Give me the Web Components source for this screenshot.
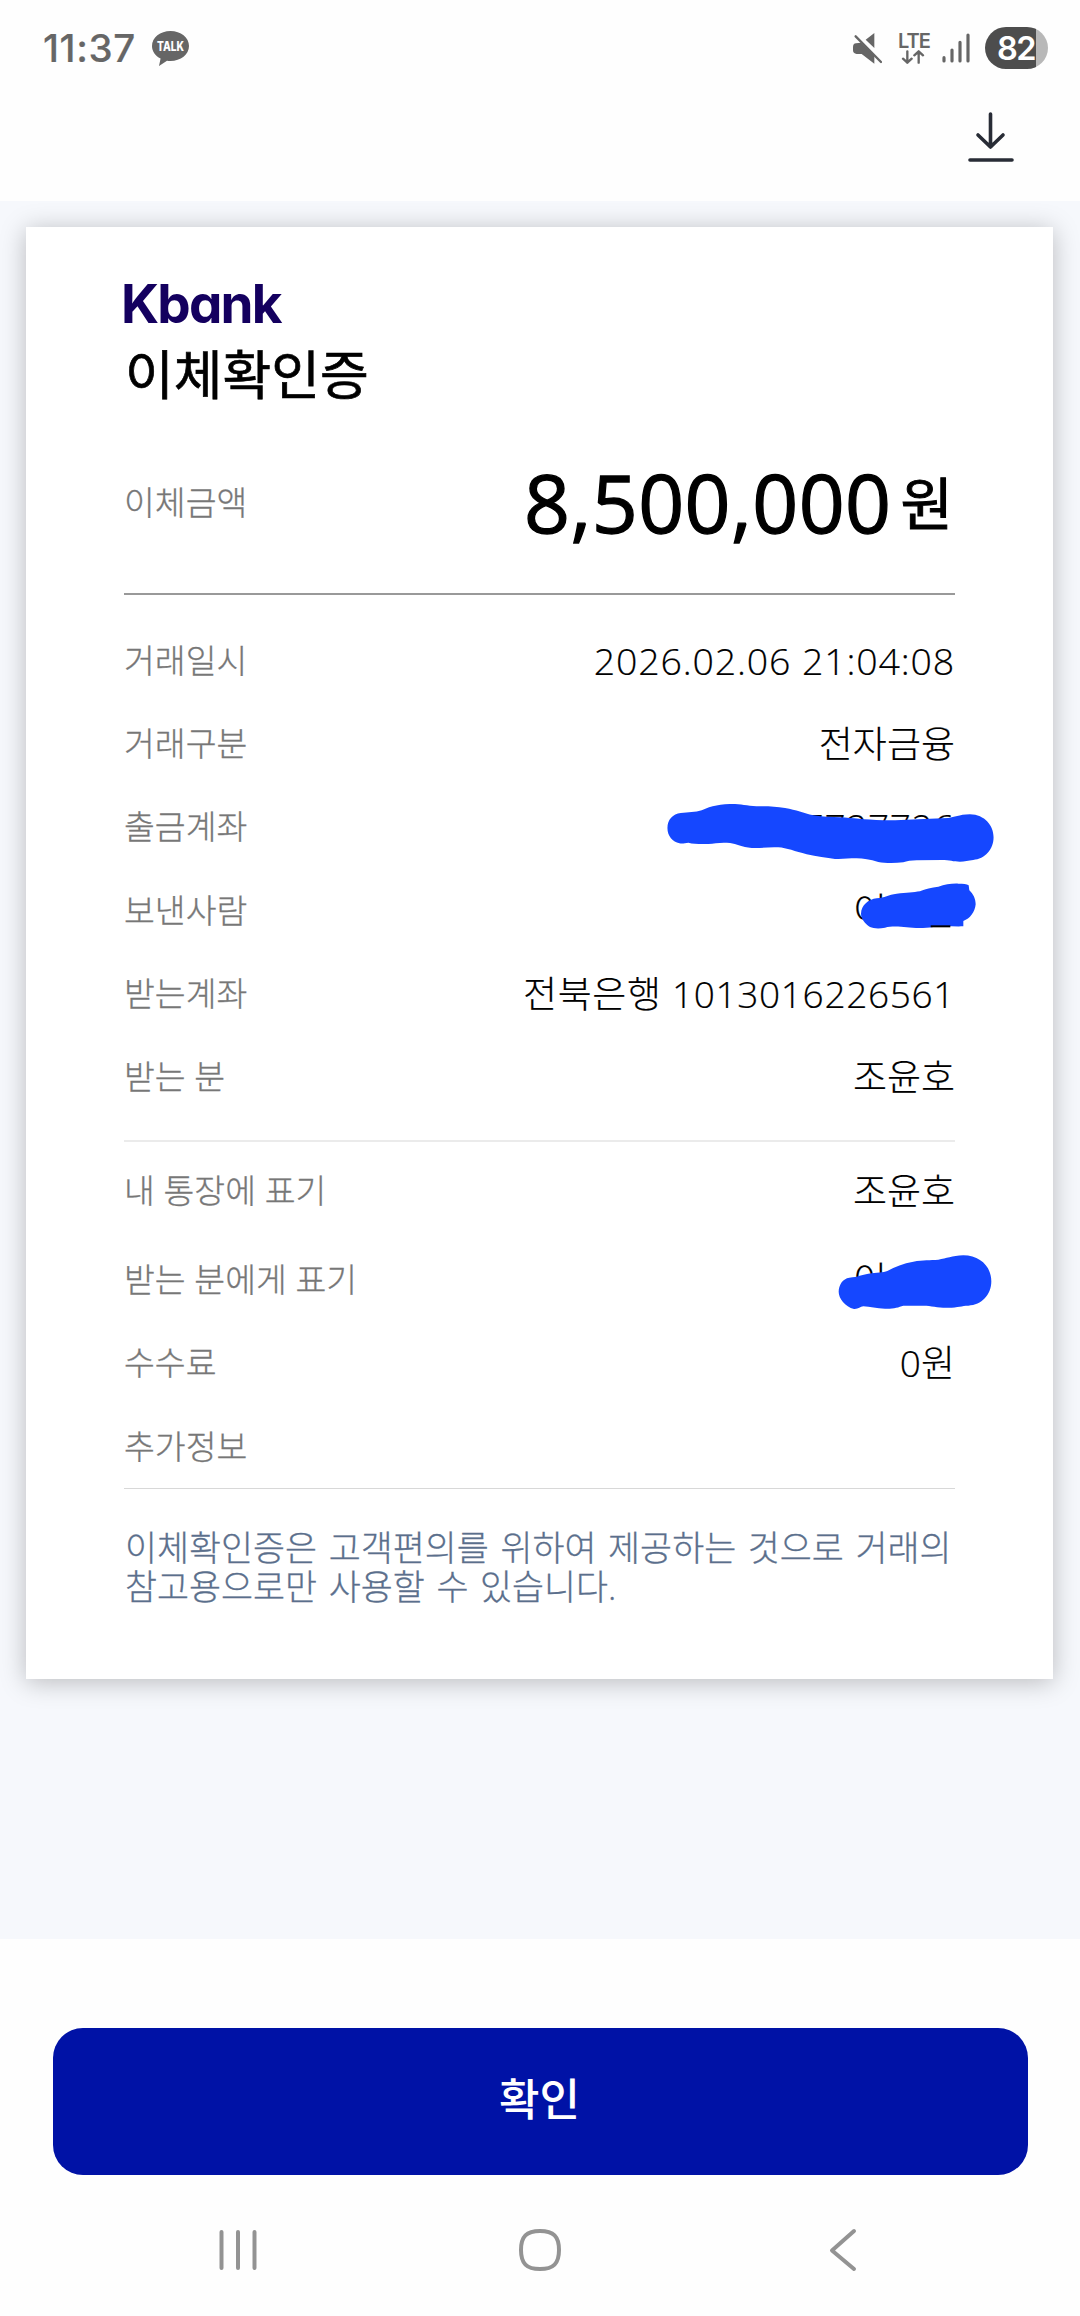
<!DOCTYPE html>
<html lang="ko">
<head>
<meta charset="utf-8">
<title>이체확인증</title>
<style>
    body {
        margin: 0;
        background: #fefefe;
        font-family: "Open Sans", "Noto Sans CJK KR", sans-serif;
        color: #000;
    }
</style>
</head>
<body>
<app-screen>
    <status-bar slot="top" time="11:37" battery="82"></status-bar>
    <tool-bar slot="top"></tool-bar>
    <receipt-card heading="이체확인증">
        <amount-row slot="amount" label="이체금액" unit="원">8,500,000</amount-row>
        <detail-row slot="trade" label="거래일시" class="date">2026.02.06 21:04:08</detail-row>
        <detail-row slot="trade" label="거래구분">전자금융</detail-row>
        <detail-row slot="trade" label="출금계좌" class="number">7727726<redact-mark shape="account"></redact-mark></detail-row>
        <detail-row slot="trade" label="보낸사람" class="masked">이<redact-mark shape="sender"></redact-mark></detail-row>
        <detail-row slot="trade" label="받는계좌" class="number">전북은행 1013016226561</detail-row>
        <detail-row slot="trade" label="받는 분">조윤호</detail-row>
        <detail-row slot="memo" label="내 통장에 표기" class="wide">조윤호</detail-row>
        <detail-row slot="memo" label="받는 분에게 표기" class="masked">이<redact-mark shape="memo"></redact-mark></detail-row>
        <detail-row slot="memo" label="수수료">0원</detail-row>
        <detail-row slot="memo" label="추가정보"></detail-row>
        <span slot="note">이체확인증은 고객편의를 위하여 제공하는 것으로 거래의<br>참고용으로만 사용할 수 있습니다.</span>
    </receipt-card>
    <confirm-button slot="bottom">확인</confirm-button>
    <nav-bar slot="bottom"></nav-bar>
</app-screen>

<script>
    class AppScreen extends HTMLElement {
        constructor() {
            super();
            this.attachShadow({ mode: 'open' });
            this.shadowRoot.innerHTML = `
                <style>
                    :host {
                        display: flex;
                        flex-direction: column;
                        width: 1080px;
                        height: 2316px;
                        overflow: hidden;
                    }
                    main {
                        box-sizing: border-box;
                        height: 1738px;
                        padding: 26px 27px 0 26px;
                        background: #f6f8fc;
                        overflow: hidden;
                    }
                </style>
                <header><slot name="top"></slot></header>
                <main><slot></slot></main>
                <footer><slot name="bottom"></slot></footer>
            `;
        }
    }

    class StatusBar extends HTMLElement {
        constructor() {
            super();
            this.attachShadow({ mode: 'open' });
            this.shadowRoot.innerHTML = `
                <style>
                    :host {
                        display: flex;
                        align-items: center;
                        box-sizing: border-box;
                        height: 96px;
                        padding: 0 32px 0 43px;
                        font-family: Inter, sans-serif;
                        color: #666;
                    }
                    .time {
                        width: 109px;
                        font-size: 38.500px;
                        font-weight: 500;
                        letter-spacing: 0.6px;
                        -webkit-text-stroke: 0.2px #666;
                    }
                    svg { display: block; flex: none; }
                    .right {
                        display: flex;
                        align-items: center;
                        margin-left: auto;
                    }
                    .lte {
                        margin: 0 1px 0 16px;
                        width: 30px;
                        font-size: 20px;
                        font-weight: 600;
                        line-height: 17px;
                        letter-spacing: -1px;
                    }
                    .signal { margin-left: 13px; }
                    .battery {
                        display: flex;
                        align-items: center;
                        box-sizing: border-box;
                        width: 63px;
                        height: 42px;
                        margin-left: 15px;
                        padding-left: 12px;
                        border-radius: 21px;
                        background: linear-gradient(90deg, #4d4d4d 51px, #b8b8b8 51px);
                        color: #fff;
                        font-size: 32.500px;
                        font-weight: 600;
                        letter-spacing: -1.5px;
                    }
                </style>
                <span class="time"></span>
                <svg width="37" height="35" viewBox="0 0 37 35">
                    <path fill="#666" d="M18.500 0C8.300 0 0 6.500 0 15c0 5.300 3.200 9.800 8.600 12.500L7 35l8-5.300c1.100.2 2.300.3 3.500.3C28.700 30 37 23.500 37 15S28.700 0 18.500 0Z"/>
                    <text x="18.500" y="20" text-anchor="middle" font-size="12.500" font-weight="800" textLength="27" lengthAdjust="spacingAndGlyphs" fill="#fff">TALK</text>
                </svg>
                <div class="right">
                    <svg width="29" height="31" viewBox="219 98 87 93">
                        <path fill="#666" d="M257 118 283 98V143ZM228 129 243 127 283 165V190L245 161H230Q219 160 219 150V140Q219 130 228 129Z"/>
                        <path stroke="#666" stroke-width="7" stroke-linecap="round" d="M227 108 303 185"/>
                    </svg>
                    <div class="lte">LTE
                        <svg width="30" height="14" viewBox="357 152 90 42" fill="none" stroke="#666" stroke-width="7" stroke-linecap="round" stroke-linejoin="round">
                            <path d="M385 156V190M372 178 385 190 398 178M419 190V156M406 168 419 156 432 168"/>
                        </svg>
                    </div>
                    <svg class="signal" width="28" height="30" viewBox="486 100 84 90" stroke="#666" stroke-width="9.500" stroke-linecap="round">
                        <path d="M492 174V184M516 151V184M540 128V184M564 106V184"/>
                    </svg>
                    <div class="battery"></div>
                </div>
            `;
        }

        connectedCallback() {
            this.shadowRoot.querySelector('.time').textContent = this.getAttribute('time');
            this.shadowRoot.querySelector('.battery').textContent = this.getAttribute('battery');
        }
    }

    class ToolBar extends HTMLElement {
        constructor() {
            super();
            this.attachShadow({ mode: 'open' });
            this.shadowRoot.innerHTML = `
                <style>
                    :host {
                        display: flex;
                        justify-content: flex-end;
                        box-sizing: border-box;
                        height: 105px;
                        padding: 15px 66px 0 0;
                    }
                </style>
                <svg width="48" height="52" viewBox="0 0 48 52" fill="none" stroke="#282c36" stroke-width="3.600" stroke-linecap="round" stroke-linejoin="round">
                    <path d="M24.500 3V36M12 24 24.500 36 37 24M4 49H46"/>
                </svg>
            `;
        }
    }

    class ReceiptCard extends HTMLElement {
        constructor() {
            super();
            this.attachShadow({ mode: 'open' });
            this.shadowRoot.innerHTML = `
                <style>
                    :host {
                        display: block;
                        box-sizing: border-box;
                        height: 1452px;
                        padding: 44px 98px 0 98px;
                        background: #fff;
                        box-shadow: 0 3px 24px rgba(0, 0, 0, 0.25);
                    }
                    .logo {
                        height: 64px;
                        margin-left: -3px;
                        font: 700 53px/66px Inter, sans-serif;
                        font-feature-settings: "cv11";
                        letter-spacing: -1.8px;
                        color: #14005f;
                    }
                    h1 {
                        height: 80px;
                        margin: 0 0 0 1px;
                        font-size: 53px;
                        font-weight: 400;
                        line-height: 80px;
                        -webkit-text-stroke: 0.7px #000;
                    }
                    .trade {
                        height: 547px;
                        box-sizing: border-box;
                        padding-top: 24px;
                        border-bottom: 2px solid #ebebeb;
                    }
                    .memo {
                        height: 347px;
                        box-sizing: border-box;
                        padding-top: 7px;
                        border-bottom: 1px solid #d8d8d8;
                    }
                    .note {
                        margin: 39px 0 0 1px;
                        font-size: 34.800px;
                        font-weight: 300;
                        line-height: 39px;
                        word-spacing: 2.6px;
                        white-space: nowrap;
                        color: #5b6f8c;
                        -webkit-text-stroke: 0.3px #5b6f8c;
                    }
                </style>
                <div class="logo">Kbank</div>
                <h1></h1>
                <slot name="amount"></slot>
                <div class="trade"><slot name="trade"></slot></div>
                <div class="memo"><slot name="memo"></slot></div>
                <div class="note"><slot name="note"></slot></div>
            `;
        }

        connectedCallback() {
            this.shadowRoot.querySelector('h1').textContent = this.getAttribute('heading');
        }
    }

    class AmountRow extends HTMLElement {
        constructor() {
            super();
            this.attachShadow({ mode: 'open' });
            this.shadowRoot.innerHTML = `
                <style>
                    :host {
                        display: flex;
                        box-sizing: border-box;
                        height: 180px;
                        border-bottom: 2px solid #999;
                        line-height: 175px;
                        white-space: nowrap;
                    }
                    .label {
                        font-size: 33.500px;
                        font-weight: 300;
                        color: #777;
                        -webkit-text-stroke: 0.3px #777;
                    }
                    .sum {
                        margin-left: auto;
                        font-size: 80.500px;
                        letter-spacing: 0.4px;
                        -webkit-text-stroke: 1.3px #000;
                    }
                    .unit {
                        margin: 1px 2px 0 9px;
                        font-size: 57px;
                        -webkit-text-stroke: 1px #000;
                    }
                </style>
                <span class="label"></span>
                <span class="sum"><slot></slot></span>
                <span class="unit"></span>
            `;
        }

        connectedCallback() {
            this.shadowRoot.querySelector('.label').textContent = this.getAttribute('label');
            this.shadowRoot.querySelector('.unit').textContent = this.getAttribute('unit');
        }
    }

    class DetailRow extends HTMLElement {
        constructor() {
            super();
            this.attachShadow({ mode: 'open' });
            this.shadowRoot.innerHTML = `
                <style>
                    :host {
                        display: flex;
                        justify-content: space-between;
                        height: 83.200px;
                        line-height: 83.200px;
                        font-weight: 300;
                        white-space: nowrap;
                    }
                    :host(.wide) { margin-bottom: 6px; }
                    .label {
                        font-size: 33.500px;
                        color: #777;
                        -webkit-text-stroke: 0.3px #777;
                    }
                    .value {
                        position: relative;
                        font-size: 37px;
                        line-height: 83px;
                        -webkit-text-stroke: 0.2px #000;
                    }
                    :host(.date) .value {
                        font-size: 37.500px;
                        letter-spacing: 0.85px;
                    }
                    :host(.number) .value {
                        font-size: 37px;
                        letter-spacing: 0.65px;
                    }
                    :host(.masked) .value { padding-right: 68px; }
                </style>
                <span class="label"></span>
                <span class="value"><slot></slot></span>
            `;
        }

        connectedCallback() {
            this.shadowRoot.querySelector('.label').textContent = this.getAttribute('label');
        }
    }

    // marker strokes painted over private values
    const MARKS = {
        account: {
            top: 19, right: -39, w: 327, h: 59.3, box: '81 313 981 178',
            d: 'M82 385C82 360 98 343 122 340C145 338 165 338 185 332C215 318 240 313 285 313C310 314 330 320 360 320C390 320 410 321 435 325C470 331 490 340 520 347C550 352 575 352 600 353C640 355 670 360 730 362C780 362 820 358 870 357L925 355C945 353 955 345 990 344C1035 345 1061 378 1061 413C1061 450 1035 478 1000 481C985 482 975 486 960 486C940 486 930 481 905 481L830 482C815 482 800 484 790 488C765 491 735 491 715 487C690 480 670 476 650 476C625 476 610 479 585 478C560 475 530 471 500 464C465 455 440 445 415 443C385 441 360 447 335 445C305 443 290 432 270 430C240 427 225 432 205 433C180 434 160 433 145 429C135 430 128 433 118 431C98 426 82 410 82 385Z'
        },
        sender: {
            top: 14.3, right: -21, w: 116, h: 46, box: '660 548 348 138',
            d: 'M663 640C664 615 685 597 710 594C735 592 745 583 770 580C800 578 820 576 840 573C855 565 875 562 895 559C915 553 935 549 955 550C970 550 980 550 986 555L988 570C1000 582 1007 595 1007 612C1005 635 990 655 970 662V678C940 680 910 674 880 680C850 685 820 683 800 681C780 679 755 677 735 682C715 686 700 684 690 680C675 670 663 655 663 640Z',
            line: 'M872 678H931'
        },
        memo: {
            top: 17, right: -37, w: 154, h: 54.7, box: '174 105 462 164',
            d: 'M176 215C176 195 188 176 208 173C235 170 245 165 265 161C290 158 310 158 322 153C345 140 370 130 400 125C430 119 450 121 475 119C500 116 515 107 550 106C600 106 634 140 634 184C634 225 605 255 565 257C545 257 535 263 505 263C475 264 455 257 430 257H370C355 262 340 267 315 266C290 266 270 260 250 259C240 260 235 268 222 267C195 260 176 235 176 215Z'
        }
    };

    class RedactMark extends HTMLElement {
        constructor() {
            super();
            this.attachShadow({ mode: 'open' });
        }

        connectedCallback() {
            const m = MARKS[this.getAttribute('shape')];
            this.shadowRoot.innerHTML = `
                <style>
                    :host {
                        position: absolute;
                        top: ${m.top}px;
                        right: ${m.right}px;
                    }
                    svg { display: block; }
                </style>
                <svg width="${m.w}" height="${m.h}" viewBox="${m.box}">
                    <path fill="#1547ff" d="${m.d}"/>
                    ${m.line ? `<path stroke="#000" stroke-width="6" d="${m.line}"/>` : ''}
                </svg>
            `;
        }
    }

    class ConfirmButton extends HTMLElement {
        constructor() {
            super();
            this.attachShadow({ mode: 'open' });
            this.shadowRoot.innerHTML = `
                <style>
                    :host {
                        display: block;
                        padding: 89px 52px 0 53px;
                    }
                    button {
                        display: block;
                        width: 975px;
                        height: 147px;
                        padding: 0 2px 9px 0;
                        border: 0;
                        border-radius: 30px;
                        background: #0012a6;
                        color: #fff;
                        font: 500 44px/1 "Noto Sans CJK KR", sans-serif;
                    }
                </style>
                <button><slot></slot></button>
            `;
        }
    }

    class NavBar extends HTMLElement {
        constructor() {
            super();
            this.attachShadow({ mode: 'open' });
            this.shadowRoot.innerHTML = `
                <style>
                    :host {
                        display: flex;
                        justify-content: space-between;
                        padding: 53px 222px 0 217px;
                    }
                    svg {
                        fill: none;
                        stroke: #939393;
                        stroke-width: 4;
                        stroke-linecap: round;
                        stroke-linejoin: round;
                    }
                    .home { margin: 0 3.5px 0 -3.5px; }
                </style>
                <svg width="42" height="44" viewBox="0 0 42 44"><path d="M4.500 4V40M21 4V40M37.500 4V40"/></svg>
                <svg class="home" width="44" height="44" viewBox="0 0 44 44"><path d="M22 3C35.500 3 41 8.500 41 22S35.500 41 22 41 3 35.500 3 22 8.500 3 22 3Z"/></svg>
                <svg width="30" height="44" viewBox="0 0 30 44"><path d="M26 3 4 22.500 26 41"/></svg>
            `;
        }
    }

    customElements.define('app-screen', AppScreen);
    customElements.define('status-bar', StatusBar);
    customElements.define('tool-bar', ToolBar);
    customElements.define('receipt-card', ReceiptCard);
    customElements.define('amount-row', AmountRow);
    customElements.define('detail-row', DetailRow);
    customElements.define('redact-mark', RedactMark);
    customElements.define('confirm-button', ConfirmButton);
    customElements.define('nav-bar', NavBar);
</script>
</body>
</html>
